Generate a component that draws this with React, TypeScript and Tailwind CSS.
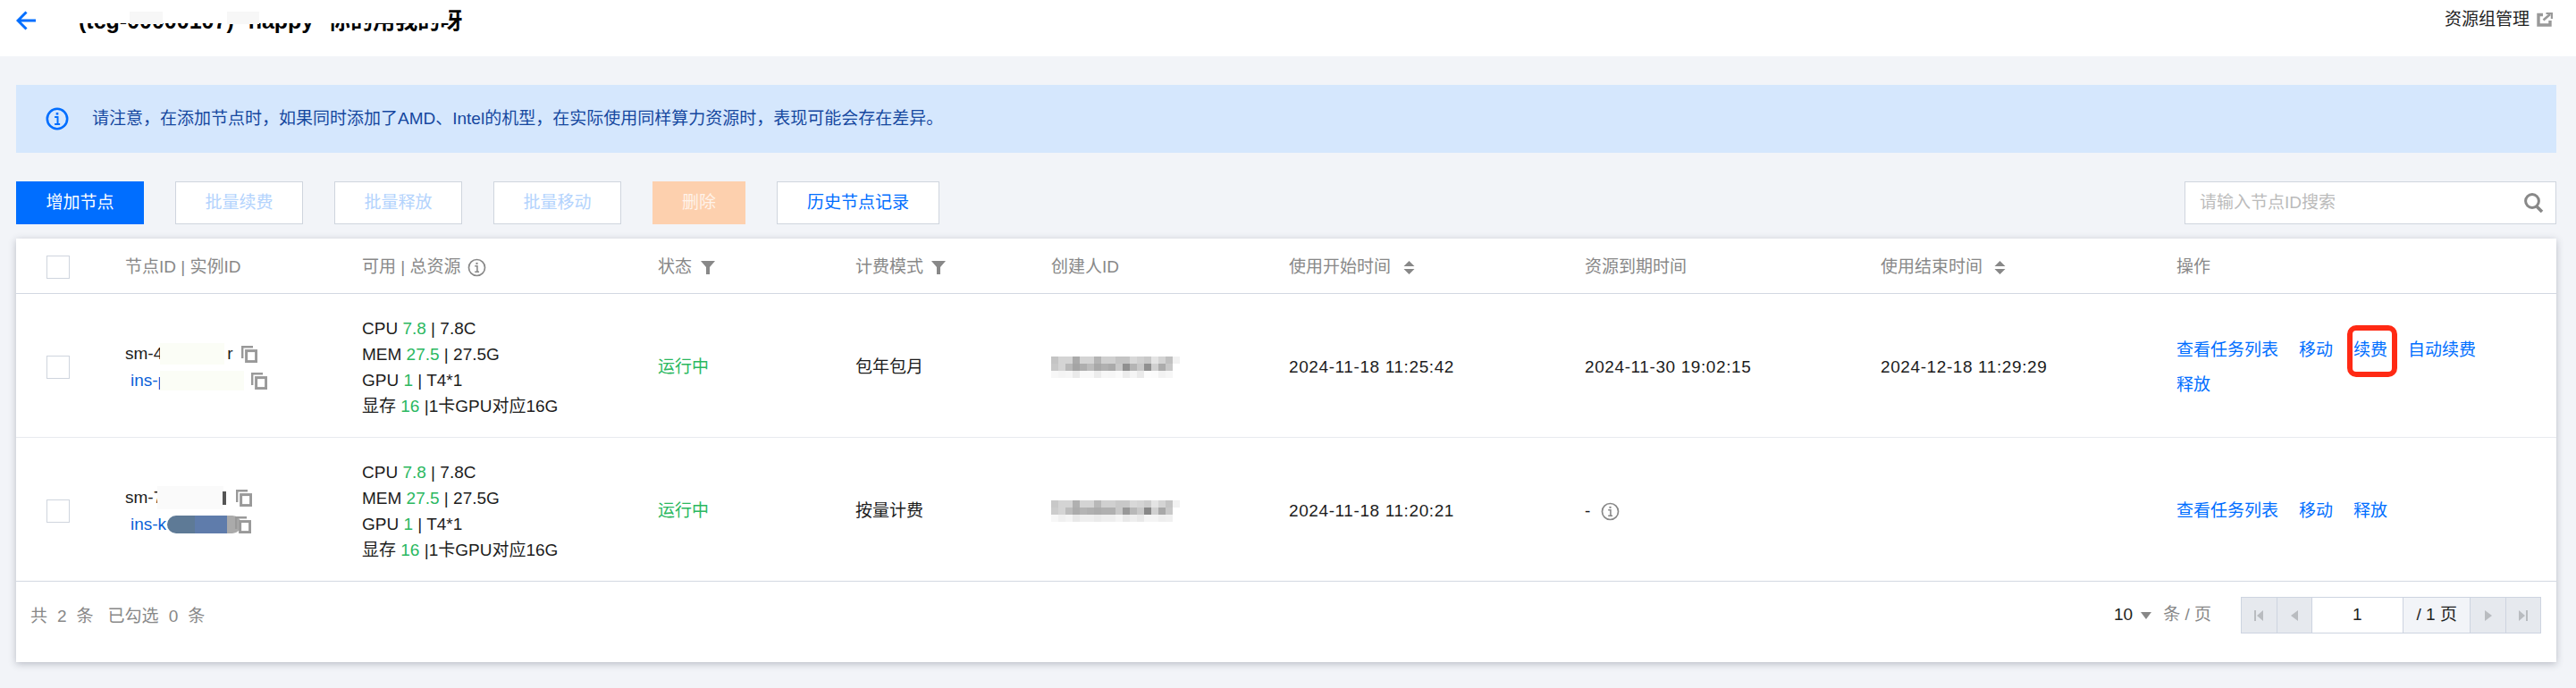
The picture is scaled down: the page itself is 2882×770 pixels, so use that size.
import React from "react";

const COLS = "grid grid-cols-[122px_265px_331px_221px_219px_266px_331px_331px_331px_1fr]";

const MOSAIC_A = [
  ["c4", "d4", "d4", "aa", "d4", "d4", "b4", "d0", "d0", "c4", "c4", "d8", "d0", "c8", "e4", "d4", "c0", "f2"],
  ["c8", "d4", "b8", "a4", "ae", "bc", "a8", "b0", "aa", "c8", "90", "b4", "c8", "90", "d0", "ac", "c8", "ff"],
  ["f7", "f4", "f6", "ea", "f8", "f8", "ec", "f7", "f6", "fa", "ec", "f5", "ea", "fc", "fb", "f2", "f6", "ff"],
];
const MOSAIC_B = [
  ["c8", "d4", "d4", "b0", "d4", "d4", "b8", "d0", "d0", "c8", "c8", "d8", "d4", "cc", "e4", "d4", "c4", "f2"],
  ["cc", "d4", "bc", "ac", "b4", "b0", "ac", "b0", "b0", "c8", "98", "b8", "c8", "88", "d0", "a8", "c8", "ff"],
  ["f7", "f0", "f4", "e8", "ee", "ee", "ea", "ee", "ee", "f4", "e8", "ee", "e8", "f4", "f4", "ee", "f0", "ff"],
];

function Mosaic({ data }: { data: string[][] }) {
  return (
    <div className="flex flex-col">
      {data.map((row, i) => (
        <div key={i} className="flex h-[8px]">
          {row.map((c, j) => (
            <span key={j} className="h-[8px] w-[8px]" style={{ backgroundColor: `#${c}${c}${c}` }} />
          ))}
        </div>
      ))}
    </div>
  );
}

function InfoIcon({ size = 20, color = "#888888", sw = 1.6 }: { size?: number; color?: string; sw?: number }) {
  return (
    <svg width={size} height={size} viewBox="0 0 20 20" fill="none" className="shrink-0">
      <circle cx="10" cy="10" r="8.6" stroke={color} strokeWidth={sw} />
      <rect x="9" y="4.6" width="2" height="2" fill={color} />
      <path d="M7.8 8.4H10.4V14M7.8 14.6H12.4" stroke={color} strokeWidth="1.5" />
    </svg>
  );
}

function Funnel() {
  return (
    <svg width="16" height="15" viewBox="0 0 16 15" className="shrink-0">
      <path d="M0 0H16L10 7V15H6V7Z" fill="#888888" />
    </svg>
  );
}

function Sort() {
  return (
    <svg width="13" height="15" viewBox="0 0 13 15" className="shrink-0">
      <path d="M6.5 0L12.5 6H0.5Z M6.5 15L0.5 9H12.5Z" fill="#888888" />
    </svg>
  );
}

function Copy({ className = "" }: { className?: string }) {
  return (
    <svg width="18" height="19" viewBox="0 0 18 19" fill="none" className={`shrink-0 ${className}`}>
      <path d="M1.2 14V1.2H13" stroke="#999999" strokeWidth="2.4" />
      <rect x="5.6" y="5.6" width="11" height="12" stroke="#999999" strokeWidth="3" />
    </svg>
  );
}

function Checkbox() {
  return <div className="h-[26px] w-[26px] border border-[#cfd5de] bg-white" />;
}

function Tri({ d }: { d: string }) {
  return (
    <svg width="16" height="16" viewBox="0 0 16 16">
      <path d={d} fill="#b9bcc0" />
    </svg>
  );
}

function Pager() {
  const side = "flex w-[39px] items-center justify-center bg-[#e6e9ee]";
  return (
    <div className="ml-[33px] flex h-[41px] w-[336px] border border-[#cdd4e0]">
      <div className={side}><Tri d="M3 2H5V14H3ZM13 2V14L6 8Z" /></div>
      <div className={`${side} border-l border-[#cdd4e0]`}><Tri d="M12 2V14L4 8Z" /></div>
      <div className="flex w-[103px] items-center justify-center border-l border-[#cdd4e0] bg-white text-[#222222]">1</div>
      <div className="flex w-[77px] items-center justify-center gap-[5px] border-x border-[#cdd4e0] bg-[#f2f4f8] text-[#222222]">/ 1 页</div>
      <div className={side}><Tri d="M4 2V14L12 8Z" /></div>
      <div className={`${side} border-l border-[#cdd4e0]`}><Tri d="M3 2V14L10 8ZM11 2H13V14H11Z" /></div>
    </div>
  );
}

function Head({ children }: { children: React.ReactNode }) {
  return <div className="flex items-center text-[#888888]">{children}</div>;
}

function Resources() {
  const g = "text-[#2bb85f]";
  return (
    <div className="flex flex-col justify-center leading-[29px] text-[#1c1c1c]">
      <div>CPU <span className={g}>7.8</span> | 7.8C</div>
      <div>MEM <span className={g}>27.5</span> | 27.5G</div>
      <div>GPU <span className={g}>1</span> | T4*1</div>
      <div>显存 <span className={g}>16</span> |1卡GPU对应16G</div>
    </div>
  );
}

function Btn({ children, tone }: { children: React.ReactNode; tone: "primary" | "off" | "danger" | "plain" }) {
  const cls = {
    primary: "w-[143px] bg-[#006eff] text-white",
    off: "w-[143px] border border-[#cfd5de] bg-white text-[#b3d3fd]",
    danger: "w-[104px] bg-[#fdd0ae] text-[#fff3ea]",
    plain: "w-[182px] border border-[#cfd5de] bg-white text-[#006eff]",
  }[tone];
  return <button className={`flex h-[48px] items-center justify-center ${cls}`}>{children}</button>;
}

function Link({ children }: { children: React.ReactNode }) {
  return <span className="text-[#006eff]">{children}</span>;
}

export default function App() {
  return (
    <div className="h-[770px] w-[2882px] overflow-hidden bg-[#f2f4f8] text-[19px] font-['Liberation_Sans','Noto_Sans_CJK_SC',sans-serif]">
      <header className="flex h-[63px] items-start justify-between bg-white pl-[18px] pr-[26px]">
        <div className="flex items-center pt-[10px]">
          <svg width="23" height="22" viewBox="0 0 23 22" fill="none">
            <path d="M22 11H3M11.5 1.5L2 11L11.5 20.5" stroke="#006eff" strokeWidth="3" />
          </svg>
          <div className="relative ml-[47px] text-[25px] font-bold leading-[26px] whitespace-nowrap text-black [word-spacing:9px]">
            (tcg-00000107) happy 你的用我的呀
            <div className="absolute left-0 top-0 h-[16px] w-[414px] bg-white" />
            <div className="absolute left-[57px] top-[3px] h-[14px] w-[37px] bg-[#f7f7f7]" />
            <div className="absolute left-[166px] top-[3px] h-[14px] w-[36px] bg-[#f7f7f7]" />
          </div>
        </div>
        <div className="flex items-center gap-[8px] pt-[10px] leading-[24px] text-[#222222]">
          资源组管理
          <svg width="18" height="16" viewBox="0 0 18 16" fill="none">
            <path d="M7 2.5H2V14H15V9" stroke="#999999" strokeWidth="3.4" />
            <path d="M7.5 8.5L15 2" stroke="#999999" strokeWidth="2.6" />
            <path d="M10.5 0.8H17V7" stroke="#999999" strokeWidth="2.4" />
          </svg>
        </div>
      </header>

      <main className="pl-[18px] pr-[22px] pt-[32px]">
        <div className="flex h-[76px] items-center gap-[26px] bg-[#d5e7fd] pl-[33px] text-[#15479f]">
          <InfoIcon size={26} color="#006eff" sw={2} />
          请注意，在添加节点时，如果同时添加了AMD、Intel的机型，在实际使用同样算力资源时，表现可能会存在差异。
        </div>

        <div className="mt-[32px] flex items-center">
          <div className="flex gap-[35px]">
            <Btn tone="primary">增加节点</Btn>
            <Btn tone="off">批量续费</Btn>
            <Btn tone="off">批量释放</Btn>
            <Btn tone="off">批量移动</Btn>
            <Btn tone="danger">删除</Btn>
            <Btn tone="plain">历史节点记录</Btn>
          </div>
          <div className="ml-auto flex h-[48px] w-[416px] items-center justify-between border border-[#cfd5de] bg-white pl-[16px] pr-[13px] text-[#bbbbbb]">
            请输入节点ID搜索
            <svg width="22" height="22" viewBox="0 0 22 22" fill="none">
              <circle cx="9" cy="9" r="7.4" stroke="#888888" strokeWidth="3" />
              <path d="M14 15L20 21" stroke="#888888" strokeWidth="3.6" />
            </svg>
          </div>
        </div>

        <section className="mt-[16px] bg-white shadow-[0_2px_8px_rgba(54,58,80,0.3)]">
          <div className={`${COLS} h-[62px] border-b border-[#d3d8e2] pt-[3px]`}>
            <div className="flex items-center pl-[34px]"><Checkbox /></div>
            <Head>节点ID | 实例ID</Head>
            <Head>可用 | 总资源<span className="ml-[7px]"><InfoIcon size={21} /></span></Head>
            <Head>状态<span className="ml-[10px]"><Funnel /></span></Head>
            <Head>计费模式<span className="ml-[9px]"><Funnel /></span></Head>
            <Head>创建人ID</Head>
            <Head>使用开始时间<span className="ml-[14px]"><Sort /></span></Head>
            <Head>资源到期时间</Head>
            <Head>使用结束时间<span className="ml-[13px]"><Sort /></span></Head>
            <Head>操作</Head>
          </div>

          <div className={`${COLS} h-[161px] border-b border-[#e8eaef] pt-[4px]`}>
            <div className="flex items-center pl-[34px]"><Checkbox /></div>
            <div className="flex flex-col justify-center leading-[30px]">
              <div className="flex items-center text-[#1c1c1c]">
                sm-4<span className="ml-[-3px] h-[24px] w-[72px] bg-[#fbfdf6]" /><span className="ml-[3px]">r</span>
                <Copy className="ml-[9px]" />
              </div>
              <div className="flex items-center pl-[6px] text-[#0a5fd8]">
                ins-p<span className="ml-[-8px] h-[22px] w-[94px] bg-[#fbfdf6]" />
                <Copy className="ml-[8px]" />
              </div>
            </div>
            <Resources />
            <div className="flex items-center text-[#2bb85f]">运行中</div>
            <div className="flex items-center text-[#1c1c1c]">包年包月</div>
            <div className="flex items-center"><Mosaic data={MOSAIC_A} /></div>
            <div className="flex items-center tracking-[0.6px] text-[#1c1c1c]">2024-11-18 11:25:42</div>
            <div className="flex items-center tracking-[0.6px] text-[#1c1c1c]">2024-11-30 19:02:15</div>
            <div className="flex items-center tracking-[0.6px] text-[#1c1c1c]">2024-12-18 11:29:29</div>
            <div className="flex flex-wrap content-center gap-x-[23px] pr-[60px] leading-[39px]">
              <Link>查看任务列表</Link>
              <Link>移动</Link>
              <span className="relative text-[#006eff]">
                续费
                <span className="absolute -bottom-[11px] -left-[7px] -right-[11px] -top-[8px] rounded-[10px] border-[6px] border-[#ff2a14]" />
              </span>
              <Link>自动续费</Link>
              <Link>释放</Link>
            </div>
          </div>

          <div className={`${COLS} h-[161px] border-b border-[#d3d8e2] pt-[4px]`}>
            <div className="flex items-center pl-[34px]"><Checkbox /></div>
            <div className="flex flex-col justify-center leading-[30px]">
              <div className="flex items-center text-[#1c1c1c]">
                sm-7<span className="ml-[-6px] h-[26px] w-[74px] bg-[#fafafa]" /><span className="ml-[-1px] h-[15px] w-[4px] bg-[#555555]" />
                <Copy className="ml-[11px]" />
              </div>
              <div className="flex items-center pl-[6px] text-[#0a5fd8]">
                ins-k
                <span className="ml-[1px] flex h-[20px] w-[83px] overflow-hidden rounded-[10px]">
                  <span className="w-[31px] bg-[#5e7a96]" />
                  <span className="w-[36px] bg-[#5f7cab]" />
                  <span className="w-[16px] bg-[#aaaaaa]" />
                </span>
                <Copy className="-ml-[7px]" />
              </div>
            </div>
            <Resources />
            <div className="flex items-center text-[#2bb85f]">运行中</div>
            <div className="flex items-center text-[#1c1c1c]">按量计费</div>
            <div className="flex items-center"><Mosaic data={MOSAIC_B} /></div>
            <div className="flex items-center tracking-[0.6px] text-[#1c1c1c]">2024-11-18 11:20:21</div>
            <div className="flex items-center gap-[12px] text-[#1c1c1c]">- <InfoIcon size={21} /></div>
            <div />
            <div className="flex items-center gap-x-[23px] text-[#006eff]">
              <span>查看任务列表</span>
              <span>移动</span>
              <span>释放</span>
            </div>
          </div>

          <div className="flex h-[90px] items-start pl-[16px] pr-[17px] pt-[17px]">
            <div className="flex h-[41px] items-center gap-[11px] pt-[3px] text-[#888888]">
              <span>共</span>
              <span>2</span>
              <span>条</span>
              <span className="ml-[5px]">已勾选</span>
              <span>0</span>
              <span>条</span>
            </div>
            <div className="ml-auto flex h-[41px] items-center text-[#222222]">
              10
              <svg width="12" height="8" viewBox="0 0 12 8" className="ml-[9px]">
                <path d="M0 0H12L6 8Z" fill="#888888" />
              </svg>
              <span className="ml-[13px] text-[#888888]">条 / 页</span>
            </div>
            <Pager />
          </div>
        </section>
      </main>
    </div>
  );
}
